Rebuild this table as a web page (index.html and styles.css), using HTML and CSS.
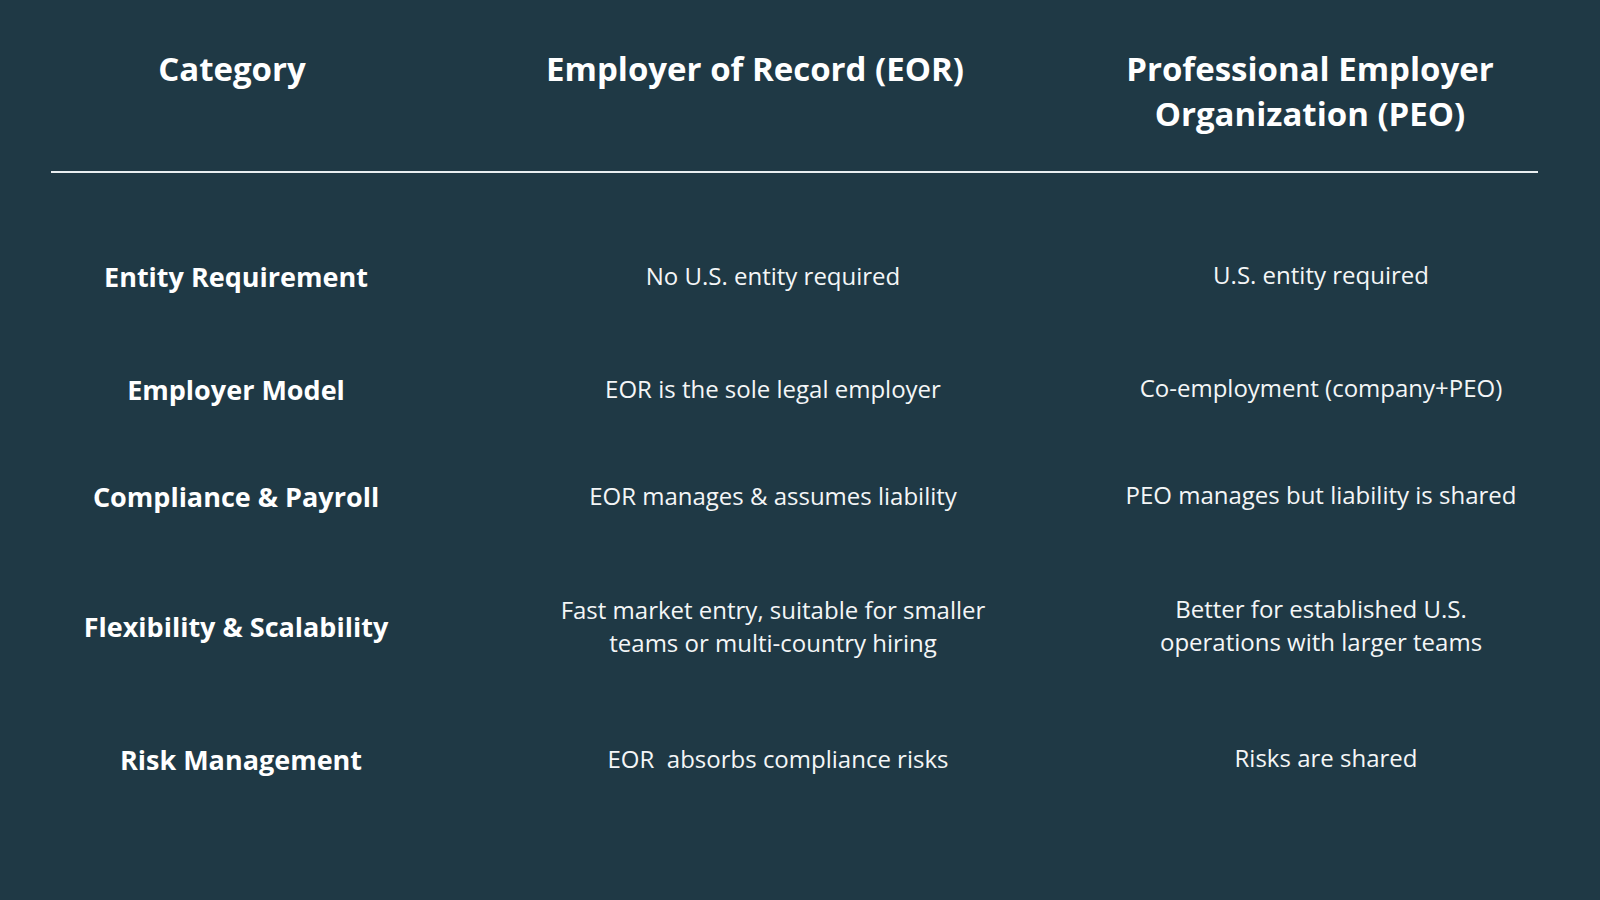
FILE: index.html
```html
<!DOCTYPE html>
<html lang="en">
<head>
<meta charset="utf-8">
<title>EOR vs PEO</title>
<link rel="stylesheet" href="styles.css">
</head>
<body>
<main class="slide">
  <div class="head">
    <div class="h h-cat">Category</div>
    <div class="h h-eor">Employer of Record (EOR)</div>
    <div class="h h-peo">Professional Employer<br>Organization (PEO)</div>
  </div>
  <hr class="rule">
  <div class="rows">
    <div class="lbl">Entity Requirement</div>
    <div class="eor">No U.S. entity required</div>
    <div class="peo">U.S. entity required</div>

    <div class="lbl">Employer Model</div>
    <div class="eor">EOR is the sole legal employer</div>
    <div class="peo">Co-employment (company+PEO)</div>

    <div class="lbl">Compliance &amp; Payroll</div>
    <div class="eor">EOR manages &amp; assumes liability</div>
    <div class="peo">PEO manages but liability is shared</div>

    <div class="lbl">Flexibility &amp; Scalability</div>
    <div class="eor">Fast market entry, suitable for smaller<br>teams or multi-country hiring</div>
    <div class="peo">Better for established U.S.<br>operations with larger teams</div>

    <div class="lbl nudge">Risk Management</div>
    <div class="eor nudge">EOR&nbsp; absorbs compliance risks</div>
    <div class="peo nudge">Risks are shared</div>
  </div>
</main>
</body>
</html>
```

FILE: styles.css
```css
html, body {
  margin: 0;
  padding: 0;
}
body {
  background: #1f3945;
  width: 1600px;
  height: 900px;
  overflow: hidden;
}
.slide {
  width: 1600px;
  height: 900px;
  color: #ffffff;
  font-family: "Open Sans", "Noto Sans", sans-serif;
}
.head {
  display: grid;
  grid-template-columns: 464px 582px 528px;
  padding-top: 46px;
  height: 171px;
  box-sizing: border-box;
}
.h {
  text-align: center;
  font-weight: 700;
  font-size: 33px;
  line-height: 45px;
}
.rule {
  margin: 0 0 0 51px;
  width: 1487px;
  height: 2px;
  border: 0;
  background: #e9eef0;
}
.rows {
  margin-top: 46px;
  display: grid;
  grid-template-columns: 472px 602px 494px;
  grid-template-rows: 113px 113px 101px 159px 107px;
  align-items: center;
}
.lbl {
  text-align: center;
  font-weight: 700;
  font-size: 27px;
  line-height: 34px;
  padding-top: 2px;
}
.eor {
  text-align: center;
  font-size: 24px;
  line-height: 33px;
  color: #f4f6f7;
}
.peo {
  text-align: center;
  font-size: 24px;
  line-height: 33px;
  color: #f4f6f7;
  padding-bottom: 2px;
}
.nudge {
  padding-left: 10px;
}
```
